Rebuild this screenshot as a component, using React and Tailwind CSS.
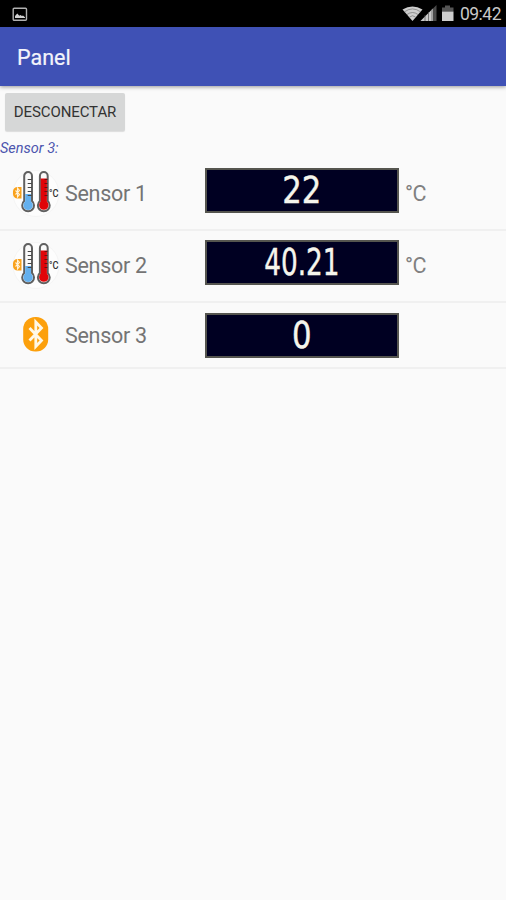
function PictureIcon() {
  return (
    <svg width="16" height="15" viewBox="0 0 16 15" fill="none" className="mt-px">
      <rect x="1.2" y="1.2" width="13.3" height="12" rx="1" stroke="#b0b0b0" strokeWidth="1.4" />
      <path d="M3 11V9l2.300-2.500 2 2.200 1-.7 1.700 1 1-.4 2 1.700V11z" fill="#d0d0d0" />
    </svg>
  )
}

function StatusIcons() {
  return (
    <svg width="52" height="18" viewBox="0 0 52 18">
      {/* Wifi */}
      <path d="M0.500 4.500Q10.500 -1.500 20.500 4.500L10.500 16z" fill="#cdcdcd" />
      <path d="M2.500 6.800Q10.500 1 18.500 6.800M5 9.500Q10.500 5.500 16 9.500M7.500 12Q10.500 9.500 13.500 12" stroke="#666" strokeWidth=".6" fill="none" />
      {/* Signal */}
      <path d="M18.500 16L34.500 0V16z" fill="#4b4b4b" />
      <path d="M18.500 16L31 3.500V16z" fill="#c9c9c9" />
      <path d="M23 10v6M26.500 7v9M30 4v12" stroke="#555" strokeWidth=".7" />
      {/* Battery */}
      <path d="M43 .5h5v2h3.500v4H40v-4h3z" fill="#555" />
      <path d="M40 6.500h11.500V16H40z" fill="#cecece" />
    </svg>
  )
}

function ThermometerIcon() {
  return (
    <svg width="48" height="48" viewBox="0 0 48 48" className="shrink-0 overflow-visible">
      <circle cx="24" cy="23.5" r="23" fill="#fdfdfd" stroke="#f5f5f5" />
      {/* Badge */}
      <path d="M5.500 17h4v11.500h-4a4.500 4.500 0 0 1-4.500-4.500v-2.500a4.500 4.500 0 0 1 4.500-4.500z" fill="#f9a11b" />
      <path d="M3.500 20.500l4 4-2 2.500v-9l2 2.500-4 4" stroke="#fff3dc" strokeWidth="1.100" fill="none" />
      {/* Cold */}
      <path d="M12.200 31V6a3.900 3.900 0 0 1 7.800 0v25a5.900 5.900 0 1 1-7.800 0z" fill="#fafafa" stroke="#606060" strokeWidth="2" />
      <path d="M13.200 24h5.800v7.600a4.700 4.700 0 1 1-5.800 0z" fill="#64b0ee" />
      <path d="M15.700 9.500h4M15.700 13.500h4M15.700 17.500h4M15.700 21.500h4M15.700 25.500h4" stroke="#444" strokeWidth="1.100" />
      {/* Hot */}
      <path d="M27.900 31V6a3.900 3.900 0 0 1 7.800 0v25a5.900 5.900 0 1 1-7.800 0z" fill="#fafafa" stroke="#606060" strokeWidth="2" />
      <path d="M28.700 8.500h6.200v23.100a4.700 4.700 0 1 1-6.200 0z" fill="#e00408" />
      <path d="M32.500 9.500h3M32.500 13.500h3M32.500 17.500h3M32.500 21.500h3M32.500 25.500h3" stroke="#6b1010" strokeWidth="1.100" />
      <text x="37" y="26.5" fontSize="11" fontWeight="500" fontFamily="Roboto, sans-serif" fill="#333" textLength="9.5" lengthAdjust="spacingAndGlyphs">°C</text>
    </svg>
  )
}

function BluetoothIcon() {
  return (
    <svg width="48" height="48" viewBox="0 0 48 48" className="shrink-0">
      <rect x="11.2" y="5" width="25" height="34.500" rx="12" fill="#fca00c" />
      <path d="M17.500 16L29.500 28.500L23.800 34.500V10L29.500 16L17.500 28.500" stroke="#fff8e8" strokeWidth="2.800" fill="none" />
    </svg>
  )
}

function Sensor({ icon, name, value, unit, className, valueClass }) {
  return (
    <div className={`flex items-start border-b-2 border-[#f0f0f0] pl-3 ${className}`}>
      <div className="flex w-[193px] items-center gap-[5px] pt-[2px]">
        {icon}
        <span className="text-[21.5px] leading-7 tracking-[-0.3px] text-[#747474]">{name}</span>
      </div>
      <div className="flex h-[45px] w-[194px] items-center justify-center border-2 border-[#55554f] bg-[#000022]">
        <span className={`font-['DejaVu_Sans_Condensed','DejaVu_Sans',sans-serif] text-[38px] leading-[41px] text-[#f5f5ec] [-webkit-text-stroke:0.4px_#f5f5ec] ${valueClass}`}>
          {value}
        </span>
      </div>
      <span className="ml-[6px] mt-[12px] text-[21.5px] leading-7 tracking-[-0.5px] text-[#808080]">{unit}</span>
    </div>
  )
}

export default function App() {
  return (
    <div className="min-h-screen bg-[#fafafa] font-[Roboto,sans-serif]">

      {/* Status bar */}
      <div className="flex h-[27px] items-center justify-between bg-black pl-3 pr-[5px]">
        <PictureIcon />
        <div className="flex items-center gap-[6px]">
          <StatusIcons />
          <span className="mt-px text-[17.5px] leading-6 tracking-[-0.5px] text-[#c8c8c8]">09:42</span>
        </div>
      </div>

      {/* App bar */}
      <header className="flex h-[59px] items-center bg-[#3f51b5] px-[17px] pt-[2px] shadow-[0_1px_4px_rgba(0,0,0,0.4)]">
        <h1 className="text-[21.5px] font-normal leading-7 text-[#f3f4fb] [-webkit-text-stroke:0.2px_#f3f4fb]">Panel</h1>
      </header>

      <button className="ml-[5px] mt-[7px] block h-[38px] w-[120px] rounded-[2px] bg-[#d6d7d7] text-[15px] tracking-[-0.1px] text-[#333] shadow-[0_1px_1px_rgba(0,0,0,0.12)]">
        DESCONECTAR
      </button>

      <p className="mt-[7px] h-[20px] pt-px text-[14.5px] italic leading-5 text-[#4c55ae]">Sensor 3:</p>

      <Sensor icon={<ThermometerIcon />} name="Sensor 1" value="22" unit="°C" className="h-[73px] pt-[10px]" valueClass="scale-x-90" />
      <Sensor icon={<ThermometerIcon />} name="Sensor 2" value="40.21" unit="°C" className="h-[72px] pt-[9px]" valueClass="scale-x-[0.77]" />
      <Sensor icon={<BluetoothIcon />} name="Sensor 3" value="0" unit="" className="h-[66px] pt-[7px] *:not-first:mt-[3px]" valueClass="scale-x-90" />

    </div>
  )
}
